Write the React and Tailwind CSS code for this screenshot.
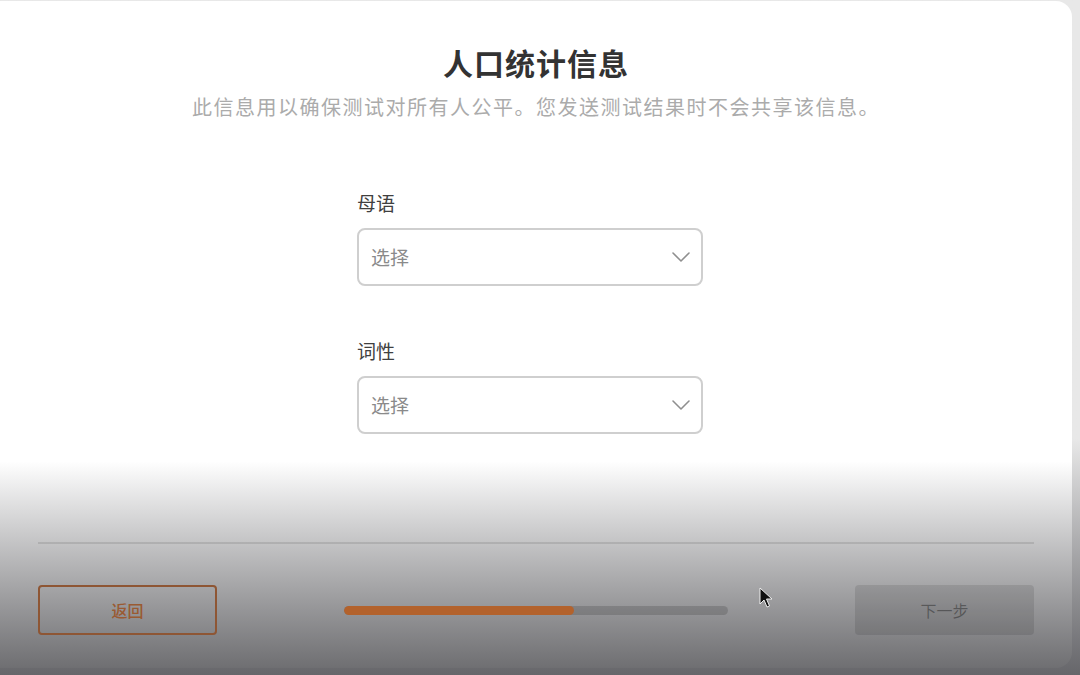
import { ChevronDown } from "lucide-react";

const FIELDS = [
  { label: "母语", placeholder: "选择" },
  { label: "词性", placeholder: "选择" },
];

function SelectField({ label, placeholder }) {
  return (
    <div className="flex flex-col">
      <label className="text-[19px] leading-6 text-[#404040]">{label}</label>
      <button
        type="button"
        className="mt-[13px] flex h-[58px] w-full items-center justify-between rounded-lg border-2 border-[#cfcfcf] bg-white pl-[12px] pr-[4px] text-left"
      >
        <span className="text-[19px] text-[#8a8a8a]">{placeholder}</span>
        <ChevronDown className="h-8 w-8 text-[#8f8f8f]" strokeWidth={1.2} />
      </button>
    </div>
  );
}

function Cursor() {
  return (
    <svg viewBox="0 0 14 22" className="absolute left-[759px] top-[587px] h-[22px] w-[14px]">
      <path d="M1 1 L1 17 L5 13 L8 20 L10.5 19 L7.5 12 L13 12 Z" fill="#111" stroke="#eee" strokeWidth="1" strokeLinejoin="round" />
    </svg>
  );
}

export default function App() {
  return (
    <div
      className="relative h-[675px] w-[1080px] overflow-hidden bg-linear-to-b from-[#e8e8e8] from-[65%] to-[#66666a] pt-px pr-[8px] pb-[7px]"
      style={{ fontFamily: '"Noto Sans CJK SC", "Noto Sans", sans-serif' }}
    >
      <div className="flex h-[667px] flex-col rounded-r-2xl bg-linear-to-b from-white from-[69%] to-[#6f6f72]">
        <div className="flex flex-col items-center pt-[40px]">
          <h1 className="text-[30px] leading-[42px] font-semibold tracking-[1px] text-[#333333]">人口统计信息</h1>
          <p className="mt-[10px] text-[20px] leading-7 tracking-[1.5px] text-[#ababab]">
            此信息用以确保测试对所有人公平。您发送测试结果时不会共享该信息。
          </p>
        </div>

        <div className="ml-[357px] mt-[70px] flex w-[346px] flex-col gap-[53px]">
          {FIELDS.map((f) => (
            <SelectField key={f.label} {...f} />
          ))}
        </div>

        <div className="mx-[38px] mt-auto mb-[33px] border-t-2 border-black/10 pt-[41px]">
          <div className="flex h-[50px] items-center justify-between">
            <button
              type="button"
              className="flex h-[50px] w-[179px] items-center justify-center rounded-[4px] border-2 border-[#8e5634] text-[16px] font-medium text-[#9a5a32]"
            >
              返回
            </button>
            <div className="h-[9px] w-[384px] overflow-hidden rounded-full bg-black/15">
              <div className="h-full w-[60%] rounded-full bg-[#b3622c]" />
            </div>
            <button
              type="button"
              disabled
              className="flex h-[50px] w-[179px] items-center justify-center rounded-[4px] bg-black/10 text-[16px] text-black/35"
            >
              下一步
            </button>
          </div>
        </div>
      </div>
      <Cursor />
    </div>
  );
}
